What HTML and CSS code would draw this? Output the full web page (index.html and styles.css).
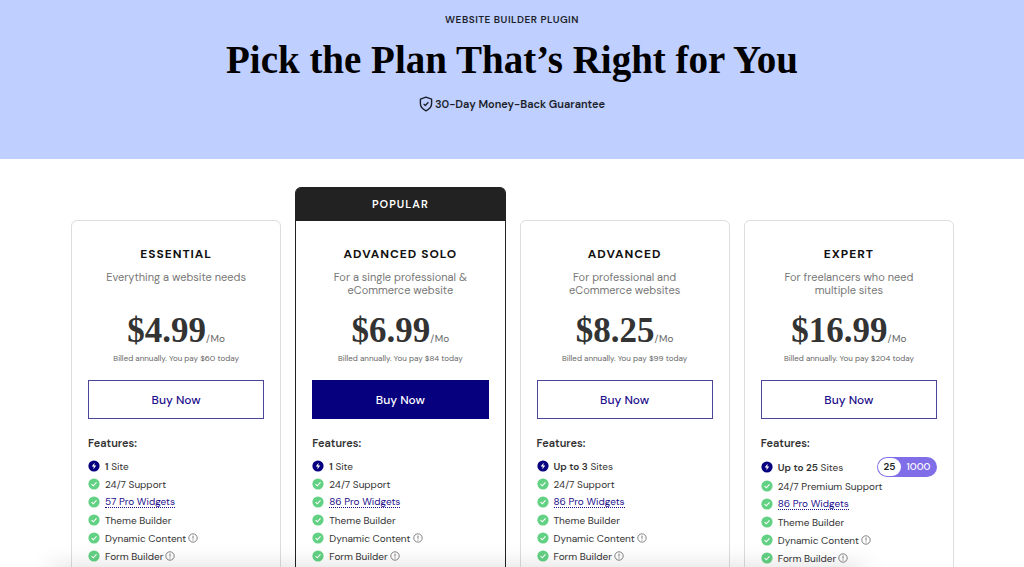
FILE: index.html
```html
<!DOCTYPE html>
<html lang="en">
<head>
  <meta charset="UTF-8">
  <meta name="viewport" content="width=device-width, initial-scale=1.0">
  <title>Pricing</title>
  <link rel="stylesheet" href="styles.css">
</head>
<body>
  <!-- shared icons -->
  <svg class="icon-defs" aria-hidden="true">
    <symbol id="bolt" viewBox="0 0 12 12">
      <circle cx="6" cy="6" r="5.6" fill="#06007f"/>
      <path d="M6.6 2.8 3.7 6.6h2L5.4 9.2l2.9-3.8h-2z" fill="#fff"/>
    </symbol>
    <symbol id="check" viewBox="0 0 12 12">
      <circle cx="6" cy="6" r="5.6" fill="#62d183"/>
      <path d="M3.6 6.2 5.3 7.8 8.5 4.4" fill="none" stroke="#fff" stroke-width="1.1"/>
    </symbol>
    <symbol id="info" viewBox="0 0 10 10">
      <circle cx="5" cy="5" r="4.2" fill="none" stroke="#666" stroke-width=".8"/>
      <path d="M5 2.6v3M5 6.5v1" fill="none" stroke="#666" stroke-width=".9"/>
    </symbol>
  </svg>

  <header class="hero">
    <p class="eyebrow">WEBSITE BUILDER PLUGIN</p>
    <h1>Pick the Plan That’s Right for You</h1>
    <p class="guarantee">
      <svg class="shield" viewBox="0 0 14 16" aria-hidden="true">
        <path d="M7 1.2 12.6 3.2v4.6c0 3.2-2.3 5.4-5.6 7-3.3-1.6-5.6-3.8-5.6-7V3.2z" fill="none" stroke="#1c1f2b" stroke-width="1.4" stroke-linejoin="round"/>
        <path d="M4.6 7.9 6.3 9.5 9.4 6.2" fill="none" stroke="#1c1f2b" stroke-width="1.3"/>
      </svg>
      30-Day Money-Back Guarantee
    </p>
  </header>

  <main class="plans">
    <section class="plan">
      <div class="plan-body">
        <h2>ESSENTIAL</h2>
        <p class="description">Everything a website needs</p>
        <p class="price"><strong>$4.99</strong><span>/Mo</span></p>
        <p class="billing">Billed annually. You pay $60 today</p>
        <button class="buy" type="button">Buy Now</button>
        <h3>Features:</h3>
        <ul class="features">
          <li><svg class="icon"><use href="#bolt"/></svg><span><b>1</b> Site</span></li>
          <li><svg class="icon"><use href="#check"/></svg>24/7 Support</li>
          <li><svg class="icon"><use href="#check"/></svg><a href="#">57 Pro Widgets</a></li>
          <li><svg class="icon"><use href="#check"/></svg>Theme Builder</li>
          <li><svg class="icon"><use href="#check"/></svg>Dynamic Content<svg class="info"><use href="#info"/></svg></li>
          <li><svg class="icon"><use href="#check"/></svg>Form Builder<svg class="info"><use href="#info"/></svg></li>
        </ul>
      </div>
    </section>

    <section class="plan popular">
      <p class="ribbon">POPULAR</p>
      <div class="plan-body">
        <h2>ADVANCED SOLO</h2>
        <p class="description">For a single professional &amp;<br>eCommerce website</p>
        <p class="price"><strong>$6.99</strong><span>/Mo</span></p>
        <p class="billing">Billed annually. You pay $84 today</p>
        <button class="buy" type="button">Buy Now</button>
        <h3>Features:</h3>
        <ul class="features">
          <li><svg class="icon"><use href="#bolt"/></svg><span><b>1</b> Site</span></li>
          <li><svg class="icon"><use href="#check"/></svg>24/7 Support</li>
          <li><svg class="icon"><use href="#check"/></svg><a href="#">86 Pro Widgets</a></li>
          <li><svg class="icon"><use href="#check"/></svg>Theme Builder</li>
          <li><svg class="icon"><use href="#check"/></svg>Dynamic Content<svg class="info"><use href="#info"/></svg></li>
          <li><svg class="icon"><use href="#check"/></svg>Form Builder<svg class="info"><use href="#info"/></svg></li>
        </ul>
      </div>
    </section>

    <section class="plan">
      <div class="plan-body">
        <h2>ADVANCED</h2>
        <p class="description">For professional and<br>eCommerce websites</p>
        <p class="price"><strong>$8.25</strong><span>/Mo</span></p>
        <p class="billing">Billed annually. You pay $99 today</p>
        <button class="buy" type="button">Buy Now</button>
        <h3>Features:</h3>
        <ul class="features">
          <li><svg class="icon"><use href="#bolt"/></svg><span><b>Up to 3</b> Sites</span></li>
          <li><svg class="icon"><use href="#check"/></svg>24/7 Support</li>
          <li><svg class="icon"><use href="#check"/></svg><a href="#">86 Pro Widgets</a></li>
          <li><svg class="icon"><use href="#check"/></svg>Theme Builder</li>
          <li><svg class="icon"><use href="#check"/></svg>Dynamic Content<svg class="info"><use href="#info"/></svg></li>
          <li><svg class="icon"><use href="#check"/></svg>Form Builder<svg class="info"><use href="#info"/></svg></li>
        </ul>
      </div>
    </section>

    <section class="plan">
      <div class="plan-body">
        <h2>EXPERT</h2>
        <p class="description">For freelancers who need<br>multiple sites</p>
        <p class="price"><strong>$16.99</strong><span>/Mo</span></p>
        <p class="billing">Billed annually. You pay $204 today</p>
        <button class="buy" type="button">Buy Now</button>
        <h3>Features:</h3>
        <ul class="features">
          <li>
            <svg class="icon"><use href="#bolt"/></svg><span><b>Up to 25</b> Sites</span>
            <div class="site-switch">
              <input type="radio" name="sites" id="sites-25" checked>
              <label for="sites-25">25</label>
              <input type="radio" name="sites" id="sites-1000">
              <label for="sites-1000">1000</label>
            </div>
          </li>
          <li><svg class="icon"><use href="#check"/></svg>24/7 Premium Support</li>
          <li><svg class="icon"><use href="#check"/></svg><a href="#">86 Pro Widgets</a></li>
          <li><svg class="icon"><use href="#check"/></svg>Theme Builder</li>
          <li><svg class="icon"><use href="#check"/></svg>Dynamic Content<svg class="info"><use href="#info"/></svg></li>
          <li><svg class="icon"><use href="#check"/></svg>Form Builder<svg class="info"><use href="#info"/></svg></li>
        </ul>
      </div>
    </section>
  </main>
  <div class="bottom-shadow"></div>
</body>
</html>
```

FILE: styles.css
```css
* {
  box-sizing: border-box;
}
body {
  margin: 0;
  height: 100vh;
  overflow: hidden;
  background: #fff;
  color: #333;
  font-family: "DM Sans", Inter, "Liberation Sans", sans-serif;
}
h1, h2, h3, p, ul {
  margin: 0;
  padding: 0;
}
.icon-defs {
  display: none;
}

/* hero */
.hero {
  display: flex;
  flex-direction: column;
  align-items: center;
  padding: 12px 20px 46px;
  background: #bfcfff;
  color: #1c1f2b;
}
.eyebrow {
  font-size: 10px;
  line-height: 16px;
  font-weight: 600;
  letter-spacing: 0.5px;
}
h1 {
  margin: 7px 0 10px;
  font-family: "Liberation Serif", serif;
  font-size: 39px;
  line-height: 50px;
  color: #000;
}
.guarantee {
  display: flex;
  align-items: center;
  gap: 2px;
  font-size: 11px;
  line-height: 18px;
  font-weight: 600;
}
.shield {
  width: 14px;
  height: 16px;
}

/* plans */
.plans {
  display: grid;
  grid-template-columns: repeat(4, 1fr);
  gap: 14px;
  padding: 28px 70px 0 71px;
}
.plan {
  margin-top: 33px;
  border: 1px solid #ddd;
  border-radius: 6px;
}
.popular {
  margin-top: 0;
  border-color: #222;
}
.ribbon {
  background: #222;
  border-radius: 4px 4px 0 0;
  color: #fff;
  font-size: 11px;
  line-height: 33px;
  font-weight: 600;
  letter-spacing: 1px;
  text-align: center;
}
.plan-body {
  display: flex;
  flex-direction: column;
  padding: 24px 16px 60px;
  text-align: center;
}
h2 {
  font-size: 12px;
  line-height: 18px;
  letter-spacing: 1px;
  color: #111;
}
.description {
  min-height: 26px;
  margin-top: 8px;
  font-size: 11px;
  line-height: 13px;
  color: #777;
}
.price {
  display: flex;
  justify-content: center;
  align-items: baseline;
  margin-top: 14px;
  font-size: 10px;
  line-height: 12px;
  color: #666;
}
.price strong {
  font-family: "Liberation Serif", serif;
  font-size: 35px;
  line-height: 40px;
  color: #333;
}
.billing {
  font-size: 8px;
  line-height: 14px;
  color: #666;
}
.buy {
  height: 39px;
  margin-top: 15px;
  border: 1px solid #4a4599;
  background: #fff;
  color: #1d0f8c;
  font-family: inherit;
  font-size: 12px;
  font-weight: 500;
}
.popular .buy {
  background: #06007f;
  border-color: #06007f;
  color: #fff;
}
h3 {
  margin-top: 15px;
  font-size: 11px;
  line-height: 18px;
  font-weight: 600;
  text-align: left;
}
.features {
  margin-top: 5px;
  list-style: none;
  font-size: 10px;
  text-align: left;
}
.features li {
  display: flex;
  align-items: center;
  min-height: 18px;
}
.features b {
  font-weight: 600;
}
.features a {
  color: #1d0f8c;
  line-height: 11px;
  text-decoration: none;
  border-bottom: 1px dotted #1d0f8c;
}
.icon {
  width: 12px;
  height: 12px;
  margin-right: 5px;
}
.info {
  width: 10px;
  height: 10px;
  margin-left: 2px;
}

/* 25 / 1000 sites */
.site-switch {
  display: flex;
  width: 60px;
  height: 20px;
  margin-left: auto;
  padding: 1px;
  border-radius: 10px;
  background: #7f6ee8;
  color: #fff;
}
.site-switch input {
  position: absolute;
  opacity: 0;
}
.site-switch label {
  flex: 1 1 auto;
  border-radius: 9px;
  font-size: 10px;
  line-height: 18px;
  font-weight: 500;
  text-align: center;
}
.site-switch input:checked + label {
  background: #fff;
  color: #222;
  font-weight: 600;
}

.bottom-shadow {
  position: fixed;
  left: 50px;
  right: 160px;
  bottom: -20px;
  height: 20px;
  box-shadow: 0 0 24px rgba(0, 0, 0, 0.15);
}
```
